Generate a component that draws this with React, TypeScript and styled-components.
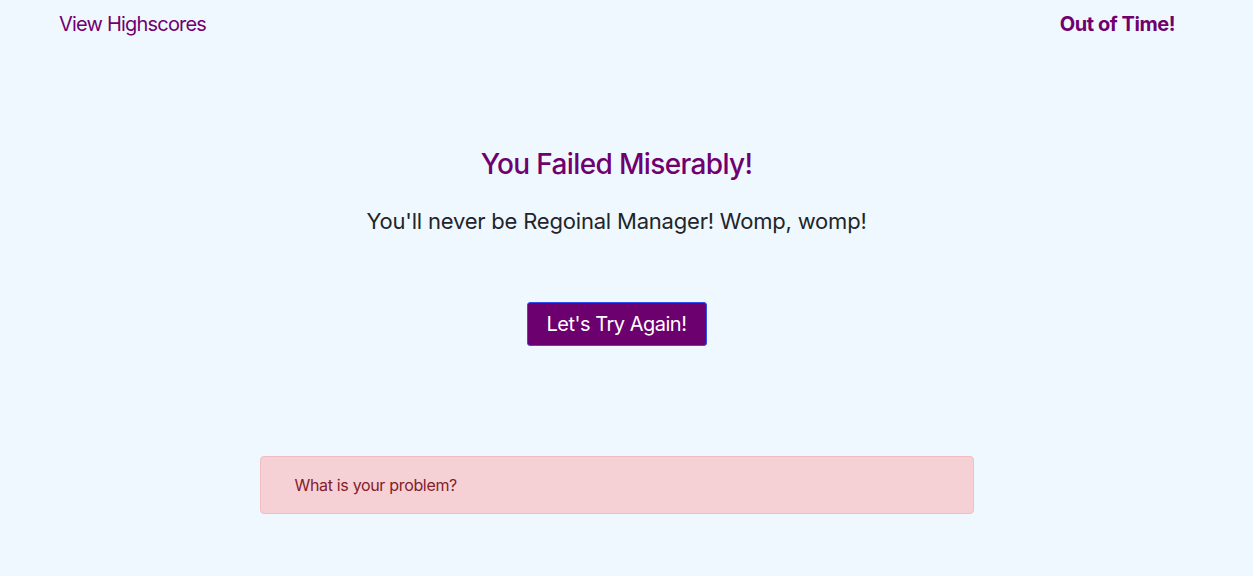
import React from "react";
import styled, { createGlobalStyle } from "styled-components";

const Global = createGlobalStyle`
  html, body { margin: 0; padding: 0; }
  body {
    background: #f0f8ff;
    font-family: Inter, "Noto Sans", sans-serif;
    color: #212529;
    min-height: 576px;
  }
`;

const Page = styled.div`
  display: flex;
  flex-direction: column;
  min-height: 576px;
`;

const TopBar = styled.header`
  display: flex;
  justify-content: space-between;
  align-items: center;
  padding: 11px 78px 0 59px;
  height: 26px;
`;

const NavLink = styled.a<{ $bold?: boolean }>`
  color: #700070;
  font-size: 20px;
  font-weight: ${(p) => (p.$bold ? 700 : 400)};
  text-decoration: none;
  cursor: pointer;
  letter-spacing: ${(p) => (p.$bold ? "-0.45px" : "-0.8px")};
`;

const Main = styled.main`
  display: flex;
  flex-direction: column;
  align-items: center;
  padding-right: 20px;
  padding-top: 110px;
`;

const Title = styled.h2`
  margin: 0;
  color: #700070;
  font-size: 28px;
  font-weight: 500;
  line-height: 34px;
  letter-spacing: -0.65px;
`;

const Lead = styled.p`
  margin: 26px 0 0;
  font-size: 22px;
  line-height: 28px;
  font-weight: 400;
  letter-spacing: -0.2px;
`;

const Button = styled.button`
  margin-top: 67px;
  width: 180px;
  height: 44px;
  background: #6d006f;
  color: #fff;
  border: 1px solid #3050f0;
  border-radius: 3px;
  font-family: inherit;
  font-size: 20px;
  letter-spacing: -0.5px;
  cursor: pointer;
`;

const Alert = styled.div`
  margin-top: 110px;
  width: 714px;
  height: 58px;
  box-sizing: border-box;
  display: flex;
  align-items: center;
  padding: 0 34px;
  background: #f5d1d6;
  border: 1px solid #f2bcc3;
  border-radius: 4px;
  color: #842029;
  font-size: 16px;
  letter-spacing: -0.33px;
`;

export default function App() {
  return (
    <Page>
      <Global />
      <TopBar>
        <NavLink>View Highscores</NavLink>
        <NavLink $bold>Out of Time!</NavLink>
      </TopBar>
      <Main>
        <Title>You Failed Miserably!</Title>
        <Lead>You'll never be Regoinal Manager! Womp, womp!</Lead>
        <Button>Let's Try Again!</Button>
        <Alert>What is your problem?</Alert>
      </Main>
    </Page>
  );
}
